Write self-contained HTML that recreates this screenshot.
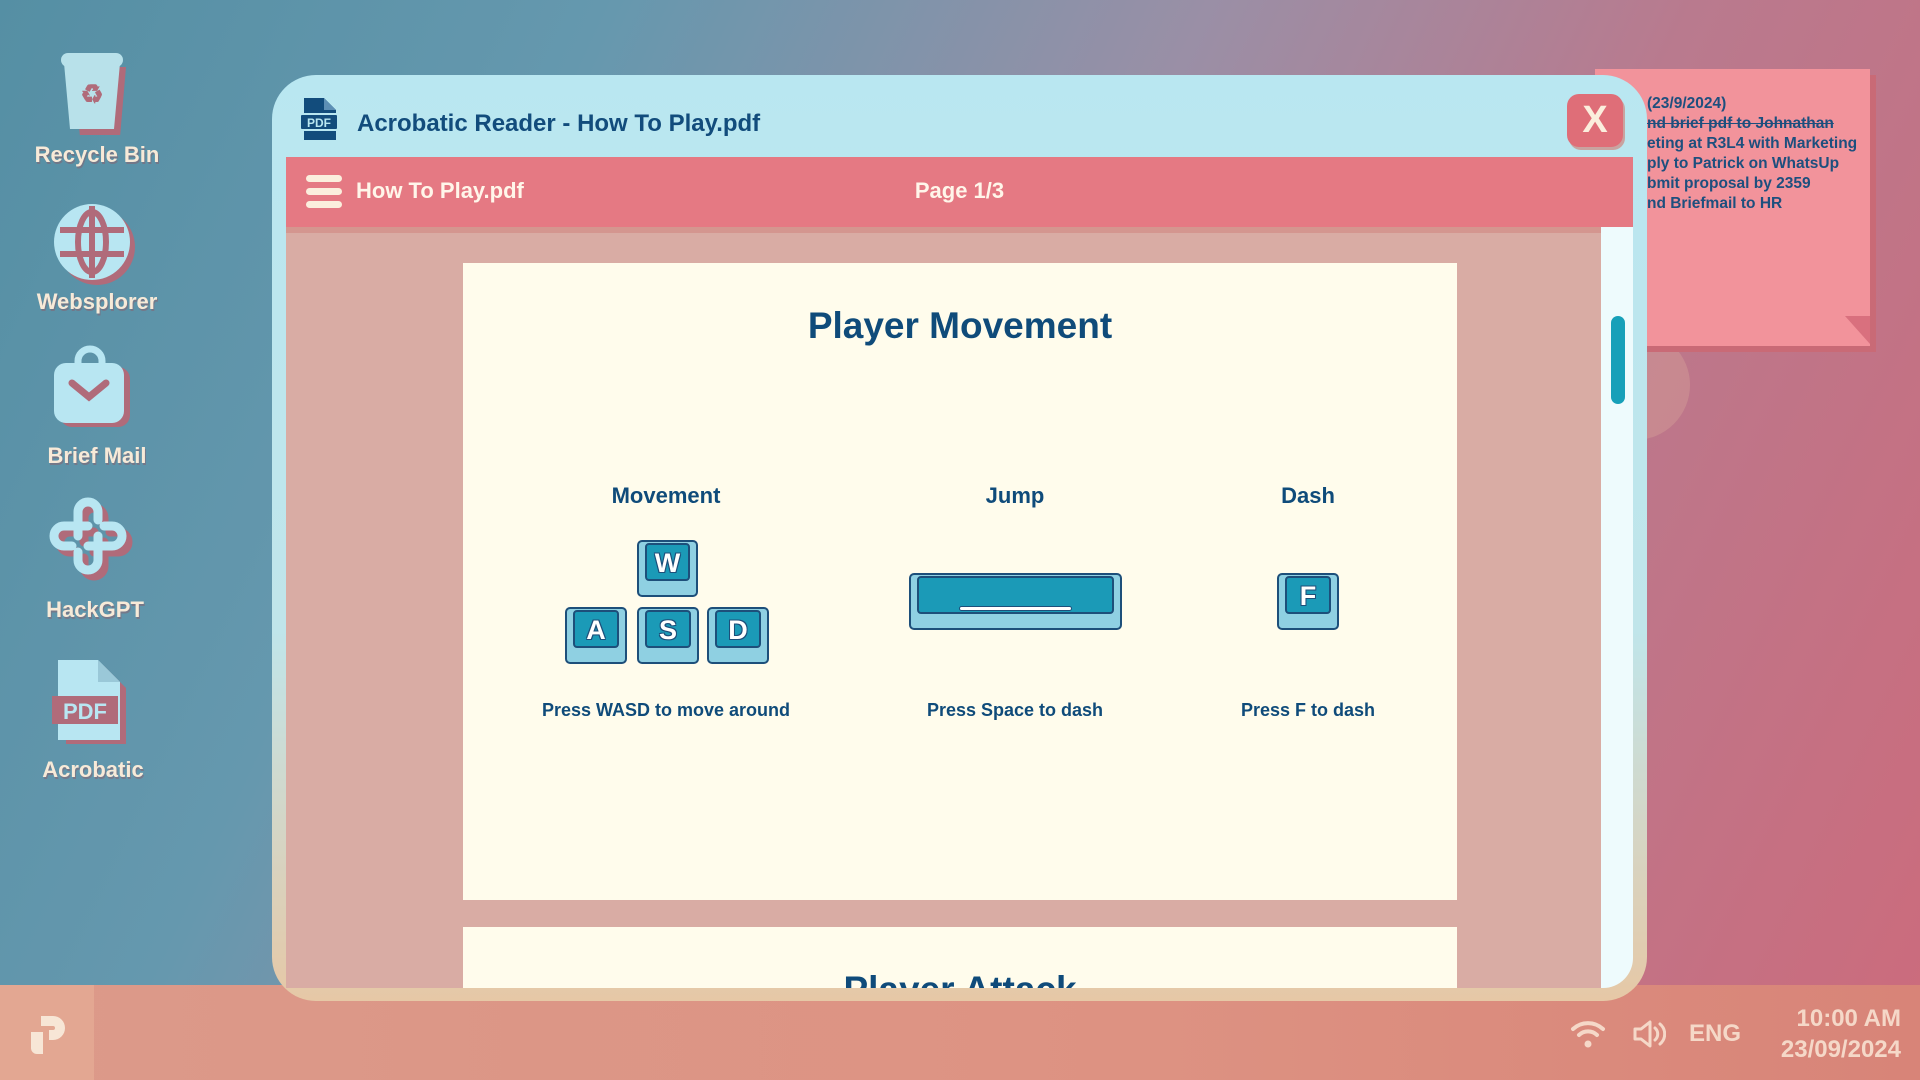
<!DOCTYPE html>
<html><head><meta charset="utf-8"><style>
*{margin:0;padding:0;box-sizing:border-box}
body{width:1920px;height:1080px;overflow:hidden;position:relative;font-family:"Liberation Sans",sans-serif;font-weight:bold;
background:linear-gradient(115deg,#558fa4 0%,#6598ae 25%,#9a8fa6 50%,#b97a8e 70%,#cc6b7c 100%);}
.abs{position:absolute}
.lbl{position:absolute;width:190px;text-align:center;color:#f7ead8;font-size:22px;text-shadow:1px 2px 0 rgba(150,80,90,.4)}
.task{position:absolute;left:0;top:985px;width:1920px;height:95px;background:linear-gradient(90deg,#dc9a8a,#dd9282 60%,#d88478)}
.note{position:absolute;left:1595px;top:69px;width:275px;height:277px;background:#f2939b;box-shadow:6px 6px 0 #c96a76}
.note div{position:absolute;left:52px;font-size:15.5px;color:#1d4f7e;white-space:nowrap}
.win{position:absolute;left:272px;top:75px;width:1375px;height:926px;border-radius:44px;background:linear-gradient(180deg,#b9e7f1 0%,#c0e5ea 60%,#e6c8a6 100%);overflow:hidden}
.tb{position:absolute;left:14px;top:82px;width:1347px;height:70px;background:#e57983}
.content{position:absolute;left:14px;top:152px;width:1315px;height:761px;background:#d9aca4;border-top:6px solid #d4968f;overflow:hidden}
.sb{position:absolute;left:1329px;top:152px;width:32px;height:761px;background:#eefbfd;border-radius:0 0 30px 0}
.page{position:absolute;background:#fffcec}
.h{position:absolute;text-align:center;color:#0f4b7a}
.key{position:absolute;background:#8fd0e2;border:2px solid #1d4f7a;border-radius:5px}
.key .f{position:absolute;left:6px;right:6px;top:1px;bottom:14px;background:#1b9ab7;border:2px solid #1d4f7a;border-radius:4px;color:#fff;font-size:27px;text-align:center;line-height:36px;text-shadow:-1px -1px 0 #1d4f7a,1px 1px 0 #1d4f7a,1px -1px 0 #1d4f7a,-1px 1px 0 #1d4f7a}
</style></head><body>
<div class="abs" style="left:1580px;top:330px;width:110px;height:110px;border-radius:50%;background:rgba(225,180,160,.3)"></div>
<div class="task"></div>
<div class="abs" style="left:0;top:985px;width:94px;height:95px;background:#e3a792"></div>
<svg class="abs" style="left:27px;top:1010px" width="46" height="46" viewBox="0 0 46 46"><path d="M14 6h12a12 12 0 0 1 0 24h-4v-10h4a2 2 0 0 0 0-4h-12z" fill="#f7e6d6"/><path d="M4 22h12v22h-6a6 6 0 0 1-6-6z" fill="#f7e6d6"/></svg>

<svg class="abs" style="left:58px;top:53px" width="80" height="82" viewBox="0 0 80 82"><path d="M10 8h52l-6 70h-40z" fill="#b06b7a" transform="translate(6,6)"/><rect x="3" y="0" width="62" height="14" rx="7" fill="#b8e1ea"/><path d="M6 10h56l-6 66h-44z" fill="#b8e1ea"/><text x="34" y="50" font-size="26" text-anchor="middle" fill="#b06b7a">♻</text></svg>
<div class="lbl" style="left:2px;top:142px">Recycle Bin</div>
<svg class="abs" style="left:52px;top:202px" width="86" height="86" viewBox="0 0 86 86"><circle cx="45" cy="45" r="38" fill="#b06b7a"/><circle cx="40" cy="40" r="38" fill="#b8e6f2"/><g stroke="#b06b7a" stroke-width="6" fill="none"><ellipse cx="40" cy="40" rx="14" ry="30"/><line x1="8" y1="28" x2="72" y2="28"/><line x1="8" y1="52" x2="72" y2="52"/><line x1="40" y1="4" x2="40" y2="76"/></g></svg>
<div class="lbl" style="left:2px;top:289px">Websplorer</div>
<svg class="abs" style="left:52px;top:345px" width="86" height="86" viewBox="0 0 86 86"><rect x="8" y="22" width="70" height="60" rx="12" fill="#b06b7a"/><path d="M26 24v-8a12 12 0 0 1 24 0v8" stroke="#b8e6f2" stroke-width="7" fill="none"/><rect x="2" y="18" width="70" height="60" rx="12" fill="#b8e6f2"/><path d="M20 38l17 14 17-14" stroke="#b06b7a" stroke-width="7" fill="none" stroke-linecap="round"/></svg>
<div class="lbl" style="left:2px;top:443px">Brief Mail</div>
<svg class="abs" style="left:48px;top:496px" width="96" height="96" viewBox="0 0 96 96"><g transform="translate(6,6)" stroke="#b06b7a" stroke-width="9" fill="none" stroke-linecap="round"><path d="M30 40V16a10 10 0 0 1 20 0v8M50 40v24a10 10 0 0 1-20 0v-8M40 30H16a10 10 0 0 0 0 20h8M40 50h24a10 10 0 0 0 0-20h-8"/></g><g stroke="#b8e6f2" stroke-width="9" fill="none" stroke-linecap="round"><path d="M30 40V16a10 10 0 0 1 20 0v8M50 40v24a10 10 0 0 1-20 0v-8M40 30H16a10 10 0 0 0 0 20h8M40 50h24a10 10 0 0 0 0-20h-8"/></g></svg>
<div class="lbl" style="left:0;top:597px">HackGPT</div>
<svg class="abs" style="left:52px;top:660px" width="86" height="90" viewBox="0 0 86 90"><path d="M14 6h38l22 22v56h-60z" fill="#b06b7a"/><path d="M6 0h40l22 22v58h-62z" fill="#b8e6f2"/><path d="M46 0v22h22" fill="#9ac8d8"/><rect x="0" y="36" width="66" height="28" fill="#b06b7a"/><text x="33" y="59" font-size="22" text-anchor="middle" fill="#b8e6f2" font-family="Liberation Sans" font-weight="bold">PDF</text></svg>
<div class="lbl" style="left:-2px;top:757px">Acrobatic</div>

<div class="note">
<div style="top:26px">(23/9/2024)</div>
<div style="top:46px;left:52px;text-decoration:line-through">nd brief pdf to Johnathan</div>
<div style="top:66px">eting at R3L4 with Marketing</div>
<div style="top:86px">ply to Patrick on WhatsUp</div>
<div style="top:106px">bmit proposal by 2359</div>
<div style="top:126px">nd Briefmail to HR</div>
<div style="left:250px;top:247px;width:0;height:0;border-left:25px solid transparent;border-top:28px solid #d9707e"></div>
</div>

<div class="win">
<svg class="abs" style="left:28px;top:23px" width="40" height="42" viewBox="0 0 40 42"><path d="M4 0h20l12 12v30h-32z" fill="#124c7c"/><path d="M24 0v12h12" fill="#5d8fb5"/><rect x="0" y="16" width="38" height="16" rx="2" fill="#124c7c" stroke="#b9e7f1" stroke-width="2"/><text x="19" y="29" font-size="12" text-anchor="middle" fill="#b9e7f1" font-family="Liberation Sans" font-weight="bold">PDF</text></svg>
<div class="abs" style="left:85px;top:35px;font-size:24px;color:#124c7c">Acrobatic Reader - How To Play.pdf</div>
<div class="abs" style="left:1295px;top:19px;width:56px;height:53px;border-radius:12px;background:#df6e78;box-shadow:2px 3px 0 #c9a3a0;color:#fbeedd;font-size:38px;text-align:center;line-height:53px">X</div>
<div class="tb">
<div class="abs" style="left:20px;top:18px;width:36px;height:7px;border-radius:4px;background:#fbeedd"></div>
<div class="abs" style="left:20px;top:31px;width:36px;height:7px;border-radius:4px;background:#fbeedd"></div>
<div class="abs" style="left:20px;top:44px;width:36px;height:7px;border-radius:4px;background:#fbeedd"></div>
<div class="abs" style="left:70px;top:21px;font-size:22px;color:#fff6ea">How To Play.pdf</div>
<div class="abs" style="left:0;width:1347px;text-align:center;top:21px;font-size:22px;color:#fff6ea">Page 1/3</div>
</div>
<div class="content">
<div class="page" style="left:177px;top:30px;width:994px;height:637px">
 <div class="h" style="left:0;width:994px;top:42px;font-size:37px">Player Movement</div>
 <div class="h" style="left:103px;width:200px;top:220px;font-size:22px">Movement</div>
 <div class="h" style="left:452px;width:200px;top:220px;font-size:22px">Jump</div>
 <div class="h" style="left:745px;width:200px;top:220px;font-size:22px">Dash</div>
 <div class="h" style="left:23px;width:360px;top:437px;font-size:18px">Press WASD to move around</div>
 <div class="h" style="left:372px;width:360px;top:437px;font-size:18px">Press Space to dash</div>
 <div class="h" style="left:665px;width:360px;top:437px;font-size:18px">Press F to dash</div>
 <div class="key" style="left:174px;top:277px;width:61px;height:57px"><div class="f">W</div></div>
 <div class="key" style="left:102px;top:344px;width:62px;height:57px"><div class="f">A</div></div>
 <div class="key" style="left:174px;top:344px;width:62px;height:57px"><div class="f">S</div></div>
 <div class="key" style="left:244px;top:344px;width:62px;height:57px"><div class="f">D</div></div>
 <div class="key" style="left:446px;top:310px;width:213px;height:57px"><div class="f"><div style="position:absolute;left:40px;right:40px;top:28px;height:5px;border-radius:3px;background:#fff;border:1px solid #1d4f7a"></div></div></div>
 <div class="key" style="left:814px;top:310px;width:62px;height:57px"><div class="f">F</div></div>
</div>
<div class="page" style="left:177px;top:694px;width:994px;height:200px">
 <div class="h" style="left:0;width:994px;top:42px;font-size:37px">Player Attack</div>
</div>
</div>
<div class="sb"><div class="abs" style="left:10px;top:89px;width:14px;height:88px;border-radius:7px;background:#17a0b9"></div></div>
</div>

<svg class="abs" style="left:1570px;top:1018px" width="36" height="32" viewBox="0 0 36 32"><g stroke="#f5d8c8" stroke-width="4" fill="none" stroke-linecap="round"><path d="M3 11a22 22 0 0 1 30 0"/><path d="M9 17a13 13 0 0 1 18 0"/></g><circle cx="18" cy="26" r="3.5" fill="#f5d8c8"/></svg>
<svg class="abs" style="left:1632px;top:1018px" width="34" height="32" viewBox="0 0 34 32"><g stroke="#f5d8c8" stroke-width="3" fill="none" stroke-linejoin="round" stroke-linecap="round"><path d="M3 11h6l9-7v24l-9-7h-6z"/><path d="M23 10a8 8 0 0 1 0 12"/><path d="M28 6a13 13 0 0 1 0 20"/></g></svg>
<div class="abs" style="left:1689px;top:1020px;font-size:24px;color:#f5d8c8">ENG</div>
<div class="abs" style="left:1700px;width:201px;text-align:right;top:1003px;font-size:24px;color:#f5d8c8;line-height:31px">10:00 AM<br>23/09/2024</div>
</body></html>
